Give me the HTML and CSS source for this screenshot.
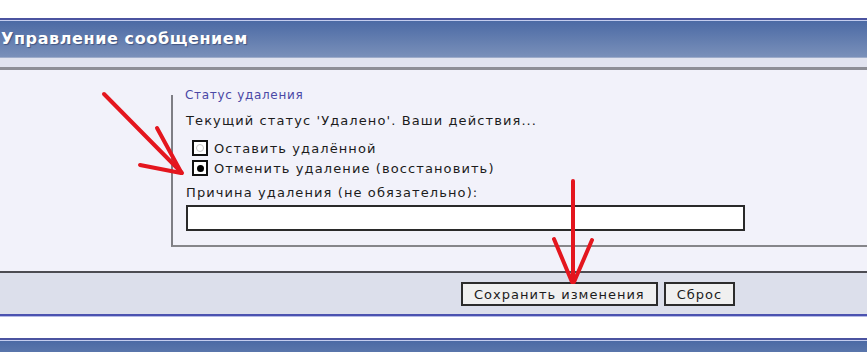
FILE: index.html
```html
<!DOCTYPE html>
<html lang="ru">
<head>
    <meta charset="UTF-8">
    <title>Управление сообщением</title>
    <link rel="stylesheet" href="styles.css">
</head>
<body>
    <div class="page">
        <div class="top-gap"></div>

        <div class="panel-head">Управление сообщением</div>
        <div class="panel-strip"></div>

        <div class="panel-body">
            <fieldset class="status-box">
                <legend>Статус удаления</legend>
                <div class="status-text">Текущий статус 'Удалено'. Ваши действия...</div>
                <div class="choices">
                    <label class="choice">
                        <span class="radio"><span class="dot"></span></span>
                        Оставить удалённой
                    </label>
                    <label class="choice">
                        <span class="radio"><span class="dot checked"></span></span>
                        Отменить удаление (восстановить)
                    </label>
                </div>
                <div class="reason-label">Причина удаления (не обязательно):</div>
                <input type="text" class="reason-input">
            </fieldset>
        </div>

        <div class="panel-foot">
            <button class="btn">Сохранить изменения</button>
            <button class="btn">Сброс</button>
        </div>

        <div class="panel-head next"></div>

        <!-- красные стрелки поверх скриншота -->
        <svg class="marks" width="867" height="352" viewBox="0 0 867 352">
            <g stroke="#e4161e" stroke-width="4" stroke-linecap="round" fill="none">
                <path d="M104 94 L182 173"/>
                <path d="M157 128 L181 172"/>
                <path d="M140 165 L181 173"/>
                <path d="M573 181 L573 282"/>
                <path d="M554 239 L572 282"/>
                <path d="M592 240 L574 282"/>
            </g>
        </svg>
    </div>
</body>
</html>
```

FILE: styles.css
```css
body {
    margin: 0;
    background: #fff;
    font-family: "DejaVu Sans", Verdana, sans-serif;
    color: #1c1c1c;
}

.page {
    position: relative;
    width: 867px;
    height: 352px;
    overflow: hidden;
}

.top-gap {
    height: 18px;
}

.panel-head {
    height: 38px;
    border-top: 2px solid #4b53a0;
    background: linear-gradient(#4a69a4, #7b91ba);
    box-shadow: inset 0 1px 0 #c4cdee, inset 0 -1px 0 #9eacca;
    color: #fff;
    font-weight: bold;
    font-size: 16px;
    letter-spacing: 0.6px;
    line-height: 38px;
    padding-left: 1px;
    text-shadow: 1px 1px 1px rgba(20, 30, 70, 0.45);
    white-space: nowrap;
}

.panel-strip {
    height: 9px;
    background: #e1e3ef;
    border-bottom: 3px solid #8d8e96;
}

.panel-body {
    background: #f2f2fa;
    padding: 18px 0 24px 0;
}

.status-box {
    margin: 0 0 0 171px;
    padding: 0 0 14px 13px;
    border: none;
    border-left: 2px solid #7e7e84;
    border-bottom: 2px solid #86868a;
    min-width: 0;
}

.status-box legend {
    padding: 0;
    margin-left: -1px;
    font-size: 12px;
    letter-spacing: 0.7px;
    line-height: 14px;
    color: #4a48a6;
}

.status-text,
.choice,
.reason-label {
    font-size: 13px;
    letter-spacing: 1.1px;
}

.status-text {
    margin-top: 10px;
    line-height: 18px;
}

.choices {
    margin-top: 8px;
}

.choice {
    display: flex;
    align-items: center;
    gap: 6px;
    height: 20px;
    padding-left: 6px;
}

.radio {
    width: 12px;
    height: 12px;
    border: 2px solid #111;
    background: #fff;
    display: grid;
    place-items: center;
}

.dot {
    width: 8px;
    height: 8px;
    border-radius: 50%;
    border: 1px solid #c4c4c4;
    box-sizing: border-box;
}

.dot.checked {
    border: none;
    background: #000;
    width: 7px;
    height: 7px;
}

.reason-label {
    margin-top: 6px;
    line-height: 18px;
}

.reason-input {
    display: block;
    margin: 3px 0 0 0;
    width: 559px;
    height: 26px;
    box-sizing: border-box;
    border: 2px solid #2a2a2a;
    background: #fff;
    outline: none;
}

.panel-foot {
    height: 45px;
    box-sizing: border-box;
    padding: 9px 0 0 461px;
    background: #dcdfeb;
    border-top: 2px solid #4c4c52;
    border-bottom: 2px solid #4b52b0;
    box-shadow: 0 1px 0 #b4bae6;
    display: flex;
    gap: 6px;
    align-items: flex-start;
}

.btn {
    height: 24px;
    padding: 0 11px;
    border: 2px solid #2c2c2c;
    background: #f0f0f0;
    font-family: "DejaVu Sans", Verdana, sans-serif;
    font-size: 13px;
    letter-spacing: 1px;
    color: #1c1c1c;
    cursor: pointer;
}

.panel-head.next {
    margin-top: 22px;
}

.marks {
    position: absolute;
    left: 0;
    top: 0;
    pointer-events: none;
}
```
